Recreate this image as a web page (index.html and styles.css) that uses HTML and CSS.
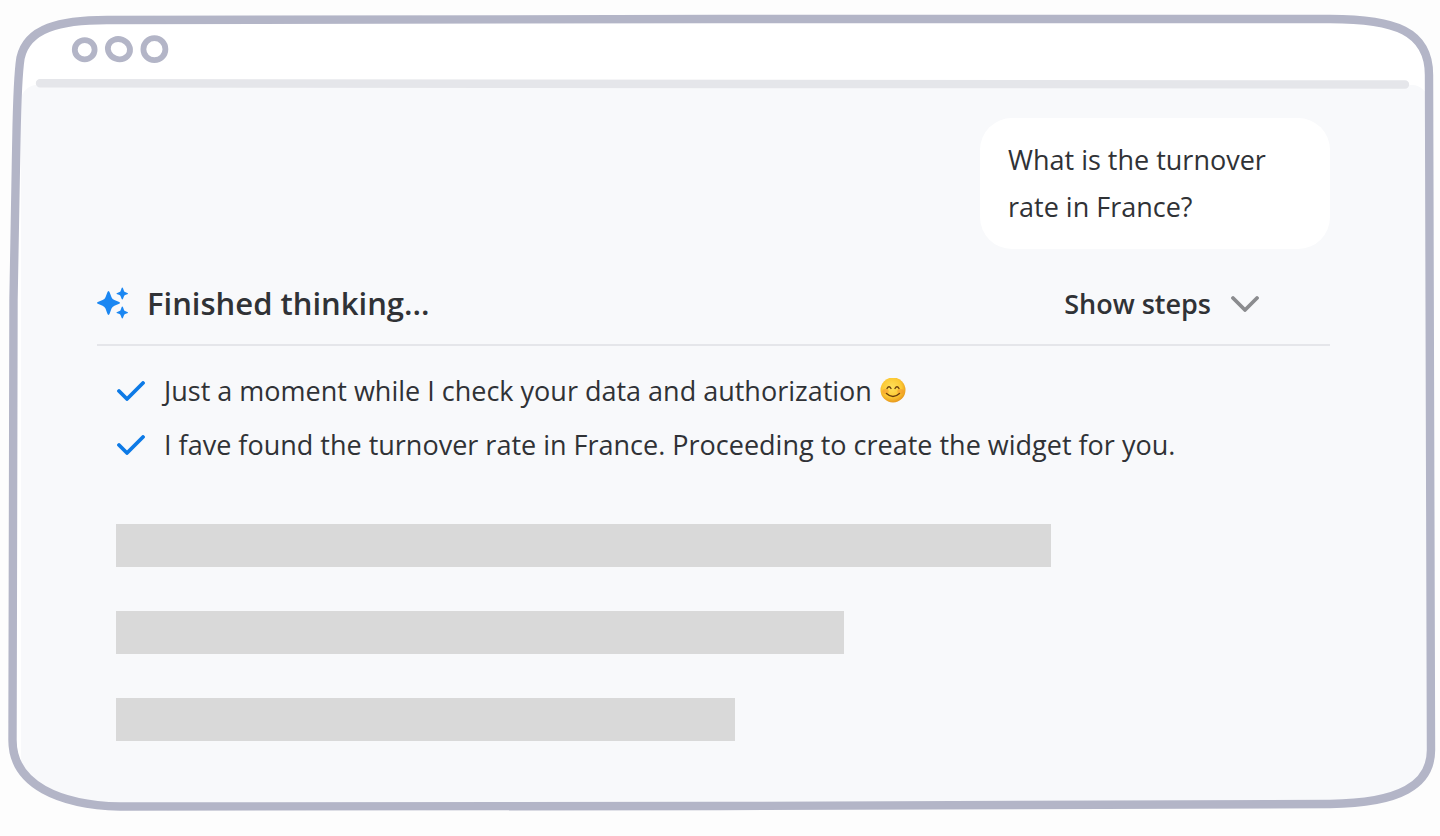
FILE: index.html
```html
<!DOCTYPE html>
<html lang="en">

<head>
  <meta charset="UTF-8">
  <meta name="viewport" content="width=device-width, initial-scale=1.0">
  <title>Assistant</title>
  <link rel="stylesheet" href="styles.css">
</head>

<body>
  <div class="window">
    <!-- hand drawn browser frame -->
    <svg class="frame" viewBox="0 0 1440 836" preserveAspectRatio="none" aria-hidden="true">
      <defs>
        <path id="outline" d="M13.5 300L16 160C17 110 17 80 20.5 58C27 28 60 20 107 20L720 19L1330 19C1395 19 1429 31 1429 75L1431 750C1431 785 1400 803 1330 804L720 806L120 806.5C60 805 12.5 785 12.5 740Z" />
        <clipPath id="frame-clip">
          <use href="#outline" />
        </clipPath>
      </defs>
      <use href="#outline" fill="#fff" />
      <rect x="21" y="85" width="1407" height="724" rx="16" fill="#f8f9fb" clip-path="url(#frame-clip)" />
      <use href="#outline" fill="none" stroke="#b3b5c7" stroke-width="8.4" />
      <path fill="none" stroke="#e5e6ea" stroke-width="8.4" stroke-linecap="round" d="M40 83.3L1405 84.5" />
    </svg>

    <div class="title-bar">
      <svg class="dots" viewBox="0 0 98 30" fill="none" stroke="#b3b5c7" stroke-width="5.8" aria-hidden="true">
        <ellipse cx="13.7" cy="15.7" rx="9.9" ry="9.6" />
        <ellipse cx="48" cy="15.2" rx="11.2" ry="10" transform="rotate(20 48 15)" />
        <ellipse cx="83.4" cy="15.2" rx="11" ry="11" />
      </svg>
    </div>

    <main class="chat">
      <p class="bubble">What is the turnover rate in France?</p>

      <div class="status">
        <svg class="sparkles" viewBox="0 0 32 32" fill="#1b87f2" aria-hidden="true">
          <path d="M11.5 4Q12.2 4 12.8 5.8L14.5 10.2Q15.3 12.3 17.4 13.1L21.6 14.7Q23 15.3 23 16Q23 16.6 21.6 17.1L17.4 18.7Q15.3 19.5 14.5 21.6L12.8 26.2Q12.2 28 11.5 28Q10.8 28 10.2 26.2L8.5 21.6Q7.7 19.5 5.6 18.7L1.4 17.1Q0 16.6 0 16Q0 15.3 1.4 14.7L5.6 13.1Q7.7 12.3 8.5 10.2L10.2 5.8Q10.8 4 11.5 4Z" />
          <path d="M25.3 0.4Q25.8 0.4 26.1 1.5L27 4Q27.3 4.8 28.1 5.1L30.3 6Q31 6.3 31 6.6Q31 7 30.3 7.3L28.1 8.1Q27.3 8.4 27 9.2L26.1 11.6Q25.8 12.6 25.3 12.6Q24.8 12.6 24.5 11.6L23.6 9.2Q23.3 8.4 22.5 8.1L20.3 7.3Q19.5 7 19.5 6.6Q19.5 6.3 20.3 6L22.5 5.1Q23.3 4.8 23.6 4L24.5 1.5Q24.8 0.4 25.3 0.4Z" />
          <path d="M25.3 19.4Q25.8 19.4 26.1 20.5L27 23Q27.3 23.8 28.1 24.1L30.3 25Q31 25.3 31 25.6Q31 26 30.3 26.3L28.1 27.1Q27.3 27.4 27 28.2L26.1 30.6Q25.8 31.6 25.3 31.6Q24.8 31.6 24.5 30.6L23.6 28.2Q23.3 27.4 22.5 27.1L20.3 26.3Q19.5 26 19.5 25.6Q19.5 25.3 20.3 25L22.5 24.1Q23.3 23.8 23.6 23L24.5 20.5Q24.8 19.4 25.3 19.4Z" />
        </svg>
        <h1 class="status-title">Finished thinking...</h1>
        <button class="steps-button" type="button">
          Show steps
          <svg class="chevron" viewBox="0 0 28 18" fill="none" stroke="#8b8c8f" stroke-width="3.8" stroke-linecap="round" stroke-linejoin="round" aria-hidden="true">
            <path d="M2 4L14 16L26 4" />
          </svg>
        </button>
      </div>

      <ul class="steps">
        <li class="step">
          <svg class="check" viewBox="0 0 28 20" fill="none" stroke="#0d7ae6" stroke-width="3.8" stroke-linecap="round" stroke-linejoin="round" aria-hidden="true">
            <path d="M2 10L10 18L26 2" />
          </svg>
          <span>Just a moment while I check your data and authorization</span>
          <svg class="emoji" viewBox="0 0 26 26" role="img" aria-label="smiling face">
            <defs>
              <radialGradient id="face" cx="0.45" cy="0.4" r="0.6">
                <stop offset="0" stop-color="#ffe05a" />
                <stop offset="0.65" stop-color="#fcc934" />
                <stop offset="1" stop-color="#e8981c" />
              </radialGradient>
            </defs>
            <circle cx="13" cy="12" r="12.5" fill="url(#face)" />
            <ellipse cx="5.5" cy="13.5" rx="3.2" ry="2.4" fill="#f58a2c" opacity="0.45" />
            <ellipse cx="20.5" cy="13.5" rx="3.2" ry="2.4" fill="#f58a2c" opacity="0.45" />
            <g fill="none" stroke="#6b3e0c" stroke-width="1.4" stroke-linecap="round">
              <path d="M7 10.5Q9 7 11 10.5M15 10.5Q17 7 19 10.5" />
              <path d="M6.5 15.5Q13 21.5 19.5 15.5" />
            </g>
          </svg>
        </li>
        <li class="step">
          <svg class="check" viewBox="0 0 28 20" fill="none" stroke="#0d7ae6" stroke-width="3.8" stroke-linecap="round" stroke-linejoin="round" aria-hidden="true">
            <path d="M2 10L10 18L26 2" />
          </svg>
          <span>I fave found the turnover rate in France. Proceeding to create the widget for you.</span>
        </li>
      </ul>

      <!-- loading placeholders -->
      <div class="skeleton">
        <div class="bar bar-long"></div>
        <div class="bar bar-medium"></div>
        <div class="bar bar-short"></div>
      </div>
    </main>
  </div>
</body>

</html>
```

FILE: styles.css
```css
* {
  margin: 0;
  padding: 0;
  box-sizing: border-box;
}

body {
  background-color: #fdfdfd;
  color: #303236;
  font-family: "Open Sans", sans-serif;
  font-size: 27px;
}

.window {
  position: relative;
  min-height: 100vh;
}

/* Frame sits behind the content */
.frame {
  position: absolute;
  top: 0;
  left: 0;
  width: 100%;
  height: 100%;
  z-index: -1;
}

.title-bar {
  height: 88px;
  padding: 34px 71px 0;
}

.dots {
  display: block;
  width: 98px;
  height: 30px;
}

.chat {
  display: flex;
  flex-direction: column;
  padding: 30px 110px 94px 97px;
}

.bubble {
  align-self: flex-end;
  width: 350px;
  padding: 18px 28px 19px;
  border-radius: 32px;
  background-color: white;
  line-height: 47px;
}

.status {
  display: flex;
  align-items: center;
  height: 97px;
  padding-top: 13px;
  border-bottom: 2px solid #e5e6ea;
}

.sparkles {
  width: 32px;
  height: 32px;
  margin-right: 18px;
}

.status-title {
  font-size: 31px;
  font-weight: 600;
}

.steps-button {
  display: flex;
  align-items: center;
  gap: 20px;
  margin-left: auto;
  margin-right: 71px;
  border: none;
  background: none;
  color: inherit;
  font-family: inherit;
  font-size: 27px;
  font-weight: 600;
  cursor: pointer;
}

.chevron {
  width: 28px;
  height: 18px;
}

.steps {
  list-style: none;
  padding: 18px 20px 0;
}

.step {
  display: flex;
  align-items: center;
  line-height: 54px;
}

.check {
  flex-shrink: 0;
  width: 28px;
  height: 20px;
  margin-right: 19px;
}

.emoji {
  width: 26px;
  height: 26px;
  margin-left: 8px;
}

.skeleton {
  display: flex;
  flex-direction: column;
  gap: 44px;
  padding: 52px 0 0 19px;
}

.bar {
  height: 43px;
  background-color: #d9d9d9;
}

.bar-long {
  width: 77%;
}

.bar-medium {
  width: 60%;
}

.bar-short {
  width: 51%;
}
```
